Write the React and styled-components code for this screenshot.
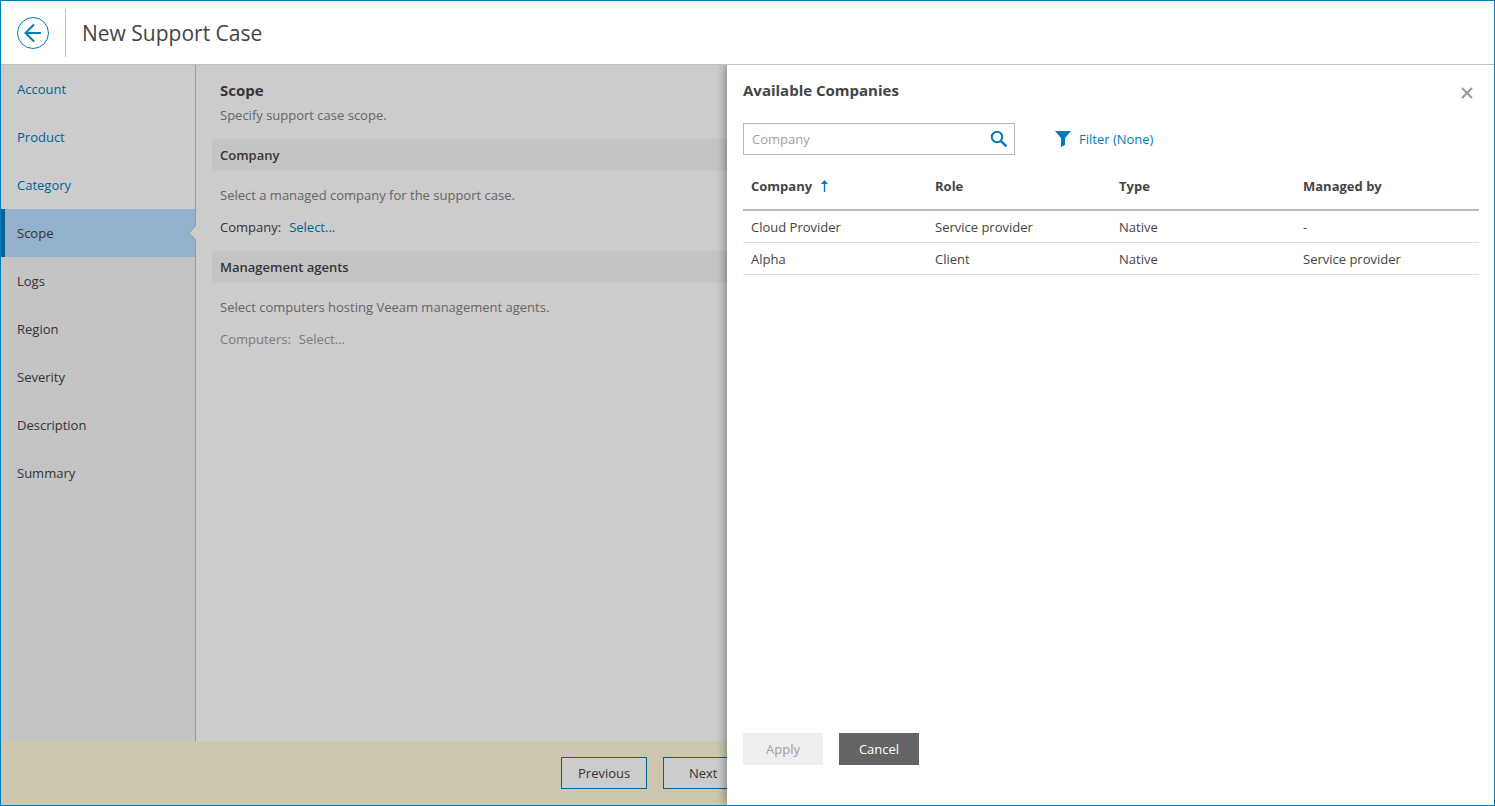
import React from "react";
import styled, { createGlobalStyle } from "styled-components";

const accent = "#007db8";

const GlobalStyle = createGlobalStyle`
  *, *::before, *::after { box-sizing: border-box; }
  body { margin: 0; }
  body, button, input {
    font-family: "Open Sans", "Noto Sans", sans-serif;
    font-size: 13px;
    line-height: 16px;
    color: #444;
  }
  h1, h2, h3, p { margin: 0; }
`;

const Window = styled.div`
  min-height: 100vh;
  display: flex;
  flex-direction: column;
  border: 1px solid ${accent};
  background: #fff;
`;

const Header = styled.header`
  display: flex;
  align-items: center;
  height: 64px;
  padding-left: 16px;
  border-bottom: 1px solid #c0c0c0;
`;

const BackButton = styled.button`
  display: flex;
  width: 32px;
  height: 32px;
  padding: 0;
  border: 0;
  background: none;
  cursor: pointer;
`;

const PageTitle = styled.h1`
  margin-left: 16px;
  padding-left: 16px;
  border-left: 1px solid #c0c0c0;
  font-size: 21px;
  font-weight: 400;
  line-height: 48px;
`;

const Body = styled.div`
  position: relative;
  flex: 1;
  display: flex;
  flex-direction: column;
`;

const Wizard = styled.div`
  flex: 1;
  display: flex;
`;

const Steps = styled.nav`
  flex: none;
  width: 195px;
  display: flex;
  flex-direction: column;
  background: #f5f5f5;
  border-right: 1px solid #c0c0c0;
`;

const Step = styled.a`
  position: relative;
  height: 48px;
  padding: 16px;
  text-decoration: none;
  color: ${(p) => (p.$state === "done" ? accent : "#444")};
  background: ${(p) => (p.$state === "current" ? "#b8dcff" : p.$state === "done" ? "#fff" : "#f5f5f5")};
  box-shadow: ${(p) => (p.$state === "current" ? `inset 4px 0 ${accent}` : "none")};
`;

const Notch = styled.svg`
  position: absolute;
  right: -1px;
  top: 16px;
`;

const Content = styled.main`
  flex: 1;
  padding: 16px;
`;

const SectionHead = styled.div`
  padding: 0 8px 8px;
`;

const Title = styled.h2`
  font-size: 15px;
  font-weight: 700;
  line-height: 18px;
`;

const Muted = styled.p`
  line-height: 32px;
  color: #808080;
`;

const GroupTitle = styled.h3`
  padding: 8px;
  background: #f5f5f5;
  font-size: 13px;
  font-weight: 600;
  line-height: 16px;
`;

const Group = styled.div`
  padding: 8px;
`;

const Field = styled.div`
  display: flex;
  align-items: center;
  gap: 8px;
  height: 32px;
  color: ${(p) => (p.$disabled ? "#9a9a9a" : "#444")};
`;

const LinkButton = styled.button`
  display: flex;
  align-items: center;
  gap: 8px;
  padding: 0;
  border: 0;
  background: none;
  color: ${accent};
  cursor: pointer;
  &:disabled { color: #9a9a9a; cursor: default; }
`;

const Footer = styled.footer`
  display: flex;
  gap: 16px;
  height: 64px;
  padding: 16px 0 16px 560px;
  background: #fffadb;
`;

const Button = styled.button`
  min-width: 80px;
  height: 32px;
  padding: 0 16px;
  border: 1px solid ${accent};
  background: #fff;
  cursor: pointer;
`;

const DrawerButton = styled(Button)`
  border: 0;
  background: #646464;
  color: #fff;
  &:disabled { background: #eee; color: #a0a0a0; cursor: default; }
`;

const Mask = styled.div`
  position: absolute;
  inset: 0;
  overflow: hidden;
  background: rgba(0, 0, 0, 0.2);
`;

const Drawer = styled.section`
  position: absolute;
  top: 0;
  right: 0;
  bottom: 0;
  width: 767px;
  max-width: 100%;
  display: flex;
  flex-direction: column;
  padding: 16px 15px 40px 16px;
  background: #fff;
  box-shadow: 0 0 10px rgba(0, 0, 0, 0.5);
`;

const DrawerHead = styled.div`
  display: flex;
  justify-content: space-between;
  height: 42px;
`;

const CloseButton = styled.button`
  display: flex;
  width: 24px;
  height: 24px;
  padding: 6px;
  border: 0;
  background: none;
  cursor: pointer;
`;

const Toolbar = styled.div`
  display: flex;
  align-items: center;
  gap: 40px;
  margin-bottom: 8px;
`;

const SearchBox = styled.div`
  display: flex;
  align-items: center;
  width: 272px;
  height: 32px;
  border: 1px solid #b8b8b8;
`;

const SearchInput = styled.input`
  flex: 1;
  min-width: 0;
  height: 30px;
  padding: 0 8px;
  border: 0;
  outline: 0;
  background: none;
  &::placeholder { color: #a0a0a0; opacity: 1; }
`;

const SearchButton = styled.button`
  display: flex;
  width: 30px;
  height: 30px;
  padding: 6px;
  border: 0;
  background: none;
  cursor: pointer;
`;

const Table = styled.table`
  width: 100%;
  table-layout: fixed;
  border-collapse: separate;
  border-spacing: 0;
`;

const Th = styled.th`
  height: 48px;
  padding: 0 8px;
  border-bottom: 2px solid #b8b8b8;
  text-align: left;
  font-weight: 700;
`;

const SortButton = styled.button`
  display: flex;
  align-items: center;
  gap: 8px;
  padding: 0;
  border: 0;
  background: none;
  font-weight: 700;
  cursor: pointer;
`;

const Td = styled.td`
  height: 32px;
  padding: 0 8px;
  border-bottom: 1px solid #e0e0e0;
`;

const DrawerActions = styled.div`
  display: flex;
  gap: 16px;
  margin-top: auto;
`;

const steps = [
  ["Account", "done"],
  ["Product", "done"],
  ["Category", "done"],
  ["Scope", "current"],
  ["Logs", "next"],
  ["Region", "next"],
  ["Severity", "next"],
  ["Description", "next"],
  ["Summary", "next"],
];

const companies = [
  ["Cloud Provider", "Service provider", "Native", "-"],
  ["Alpha", "Client", "Native", "Service provider"],
];

export default function App() {
  return (
    <>
      <GlobalStyle />
      <Window>
        <Header>
          <BackButton aria-label="Back">
            <svg width="32" height="32" viewBox="0 0 32 32" fill="none" stroke={accent}>
              <circle cx="16" cy="16" r="15.5" />
              <path d="M24 16H8.5M17 7.5L8.5 16L17 24.5" strokeWidth="2" />
            </svg>
          </BackButton>
          <PageTitle>New Support Case</PageTitle>
        </Header>
        <Body>
          <Wizard>
            <Steps>
              {steps.map(([name, state]) => (
                <Step key={name} href="#" $state={state}>
                  {name}
                  {state === "current" && (
                    <Notch width="8" height="16" viewBox="0 0 8 16">
                      <path d="M8 0.5L1 8L8 15.5" fill="#fff" stroke="#c0c0c0" />
                    </Notch>
                  )}
                </Step>
              ))}
            </Steps>
            <Content>
              <SectionHead>
                <Title>Scope</Title>
                <Muted>Specify support case scope.</Muted>
              </SectionHead>
              <GroupTitle>Company</GroupTitle>
              <Group>
                <Muted>Select a managed company for the support case.</Muted>
                <Field>
                  <span>Company:</span>
                  <LinkButton>Select...</LinkButton>
                </Field>
              </Group>
              <GroupTitle>Management agents</GroupTitle>
              <Group>
                <Muted>Select computers hosting Veeam management agents.</Muted>
                <Field $disabled>
                  <span>Computers:</span>
                  <LinkButton disabled>Select...</LinkButton>
                </Field>
              </Group>
            </Content>
          </Wizard>
          <Footer>
            <Button>Previous</Button>
            <Button>Next</Button>
          </Footer>
          <Mask>
            <Drawer>
              <DrawerHead>
                <Title>Available Companies</Title>
                <CloseButton aria-label="Close">
                  <svg width="12" height="12" viewBox="0 0 12 12" stroke="#999" strokeWidth="2">
                    <path d="M1 1L11 11M11 1L1 11" />
                  </svg>
                </CloseButton>
              </DrawerHead>
              <Toolbar>
                <SearchBox>
                  <SearchInput aria-label="Company" placeholder="Company" />
                  <SearchButton aria-label="Search">
                    <svg width="18" height="18" viewBox="0 0 18 18" fill="none" stroke={accent} strokeWidth="2">
                      <circle cx="7" cy="7" r="5.2" />
                      <path d="M10.8 10.8L16.4 16.4" strokeWidth="2.4" />
                    </svg>
                  </SearchButton>
                </SearchBox>
                <LinkButton>
                  <svg width="16" height="16" viewBox="0 0 16 16" fill={accent}>
                    <path d="M0 0H16L10 7V14L6 16V7Z" />
                  </svg>
                  Filter (None)
                </LinkButton>
              </Toolbar>
              <Table>
                <thead>
                  <tr>
                    <Th>
                      <SortButton>
                        Company
                        <svg width="9" height="12" viewBox="0 0 9 12" fill={accent}>
                          <path d="M4.5 0L8 4H5.2V12H3.8V4H1Z" />
                        </svg>
                      </SortButton>
                    </Th>
                    <Th>Role</Th>
                    <Th>Type</Th>
                    <Th>Managed by</Th>
                  </tr>
                </thead>
                <tbody>
                  {companies.map((row) => (
                    <tr key={row[0]}>
                      {row.map((cell, i) => (
                        <Td key={i}>{cell}</Td>
                      ))}
                    </tr>
                  ))}
                </tbody>
              </Table>
              <DrawerActions>
                <DrawerButton disabled>Apply</DrawerButton>
                <DrawerButton>Cancel</DrawerButton>
              </DrawerActions>
            </Drawer>
          </Mask>
        </Body>
      </Window>
    </>
  );
}
